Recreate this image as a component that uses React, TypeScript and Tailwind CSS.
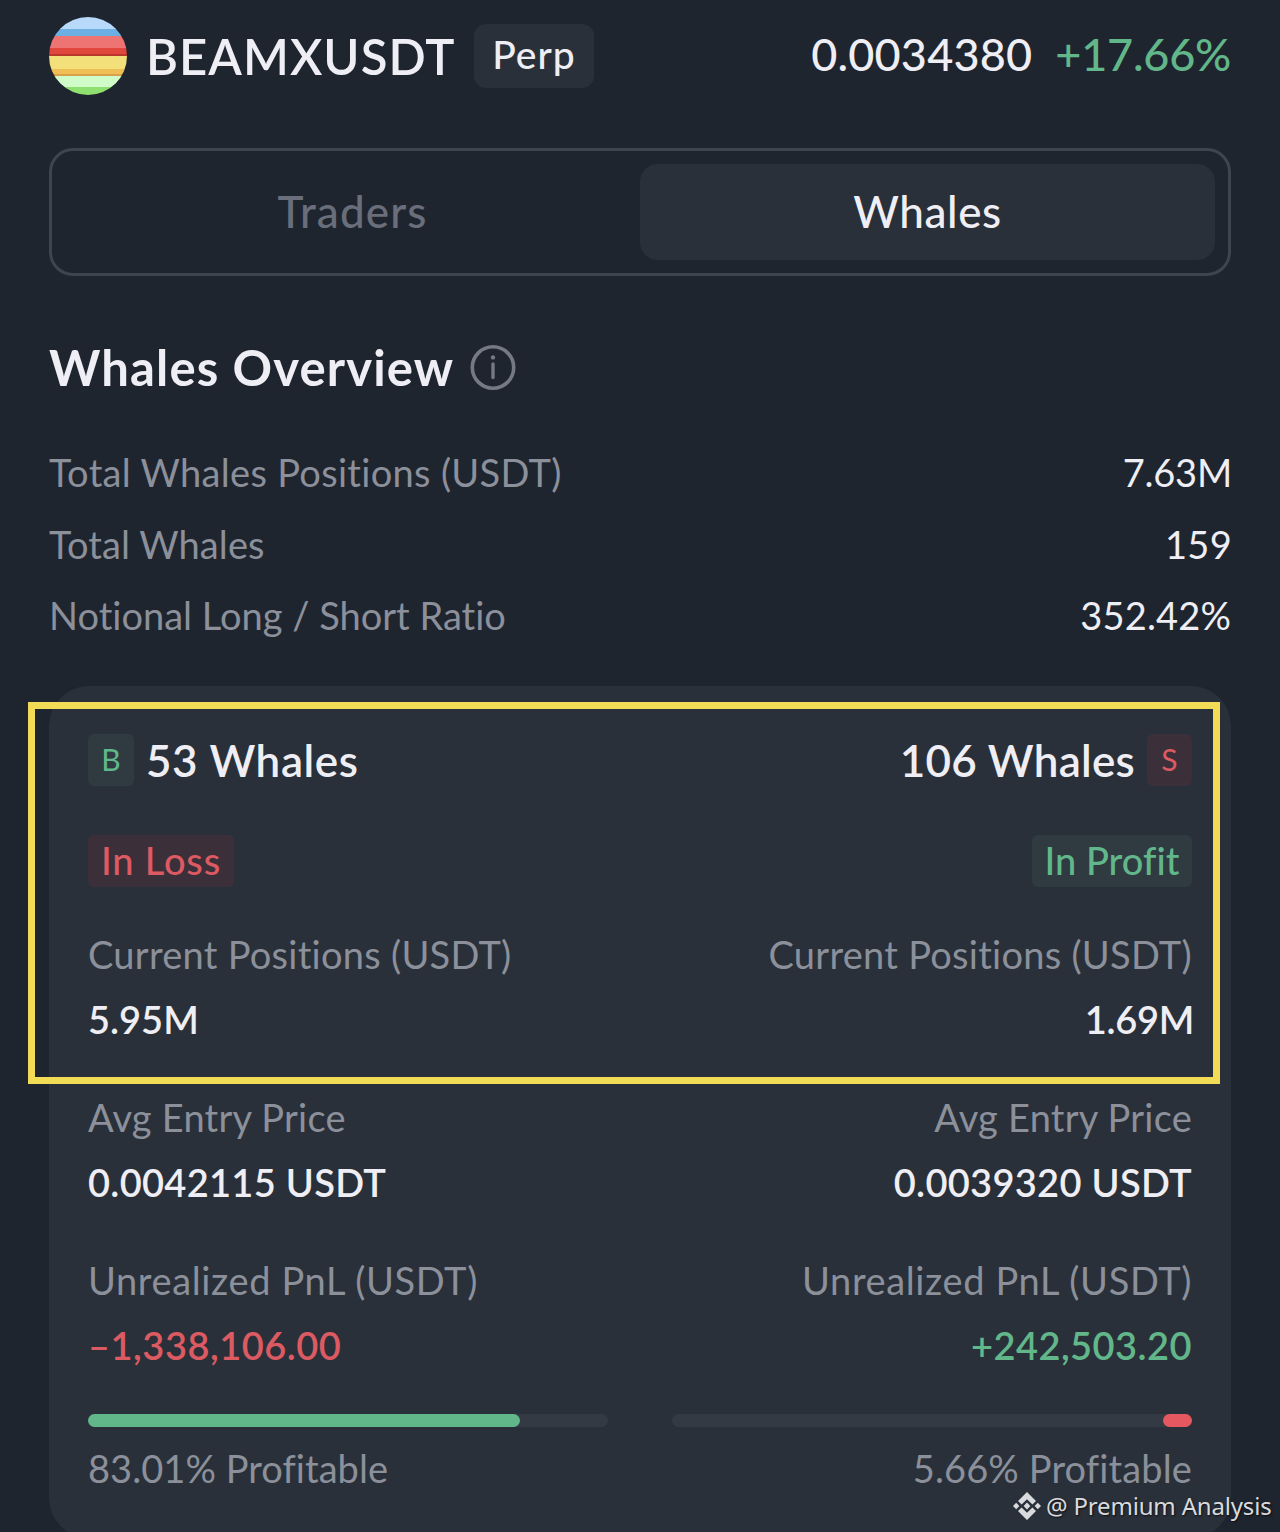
import { clsx } from 'clsx';

const overview = [
  { label: 'Total Whales Positions (USDT)', value: '7.63M', spacing: 'tracking-[0.31px]', valueSpacing: 'tracking-[-0.2px] -mr-px' },
  { label: 'Total Whales', value: '159', spacing: 'tracking-[0.1px]', valueSpacing: 'tracking-[0.3px] -mr-px' },
  { label: 'Notional Long / Short Ratio', value: '352.42%', spacing: 'tracking-[0.01px]', valueSpacing: 'tracking-[0.15px]' },
];

const bands = [
  { y: 0, h: 12, fill: '#b9d9fb' },
  { y: 12, h: 7, fill: '#6cafe2' },
  { y: 19, h: 12, fill: '#ee7373' },
  { y: 31, h: 6, fill: '#e2473d' },
  { y: 37, h: 2, fill: '#b9382c' },
  { y: 39, h: 13, fill: '#f3e07b' },
  { y: 52, h: 5, fill: '#efbf55' },
  { y: 57, h: 2, fill: '#d9a14b' },
  { y: 59, h: 11, fill: '#cffcc9' },
  { y: 70, h: 8, fill: '#8fe070' },
];

function CoinLogo() {
  return (
    <svg viewBox="0 0 78 78" className="size-[78px] shrink-0">
      <clipPath id="coin"><circle cx="39" cy="39" r="39" /></clipPath>
      <g clipPath="url(#coin)">
        {bands.map((b) => <rect key={b.y} x="0" y={b.y} width="78" height={b.h} fill={b.fill} />)}
      </g>
    </svg>
  );
}

function InfoIcon() {
  return (
    <svg viewBox="0 0 46 46" className="size-[46px]" fill="none" stroke="#747985" strokeLinecap="round">
      <circle cx="23" cy="23.5" r="20.7" strokeWidth="3.6" />
      <path d="M23 20V33.5" strokeWidth="3.4" />
      <circle cx="23" cy="13.4" r="2.2" fill="#747985" stroke="none" />
    </svg>
  );
}

function Watermark() {
  return (
    <div className="absolute top-[1488px] left-[1012px] flex h-9 items-center gap-1 whitespace-nowrap font-['Noto_Sans',sans-serif] text-[24px] tracking-[-0.18px] text-[#d9dadd] [text-shadow:1px_1px_2px_#000a]">
      <svg viewBox="0 0 30 30" className="size-[30px]" fill="#d9dadd">
        <path d="M15 1l9 9-3.6 3.6L15 8.2l-5.4 5.4L6 10z" />
        <path d="M15 29l9-9-3.6-3.6L15 21.8l-5.4-5.4L6 20z" />
        <path d="M4.2 11.8L7.4 15l-3.2 3.2L1 15z" />
        <path d="M25.8 11.8L29 15l-3.2 3.2-3.2-3.2z" />
        <path d="M15 11.6l3.4 3.4-3.4 3.4-3.4-3.4z" />
      </svg>
      <span>@ Premium Analysis</span>
    </div>
  );
}

type Stat = { label: string; labelSpacing: string; value: string; valueClass: string };

type SideProps = {
  side: 'B' | 'S';
  count: string;
  countSpacing: string;
  status: string;
  statusClass: string;
  stats: Stat[];
  percent: number;
  percentSpacing: string;
};

function WhaleSide({ side, count, countSpacing, status, statusClass, stats, percent, percentSpacing }: SideProps) {
  const short = side === 'S';
  const align = short ? 'items-end' : 'items-start';

  return (
    <div className={clsx('flex flex-1 flex-col', align)}>
      <div className={clsx('flex h-[52px] items-center gap-3', short && 'flex-row-reverse')}>
        <span
          className={clsx(
            'flex h-[52px] items-center justify-center rounded-md pb-0.5 text-[30px] leading-none',
            short ? 'w-[45px] bg-[#3b303a] text-[#dc5a62]' : 'w-[46px] bg-[#2f3b40] text-[#62b78a]',
          )}
        >
          {side}
        </span>
        <span className={clsx('text-[44px] leading-[52px] font-semibold', countSpacing)}>{count}</span>
      </div>

      <div className={clsx('mt-[49px] flex h-[52px] items-center justify-center rounded-md pb-0.5 font-medium', statusClass)}>
        {status}
      </div>

      <div className={clsx('mt-[43px] flex flex-col gap-[50px]', align)}>
        {stats.map((s) => (
          <div key={s.label} className={clsx('flex flex-col gap-[17px] leading-[48px]', align)}>
            <div className={clsx('text-[#8b909b]', s.labelSpacing)}>{s.label}</div>
            <div className={clsx('font-semibold', s.valueClass)}>{s.value}</div>
          </div>
        ))}
      </div>

      <div className={clsx('mt-[45px] flex h-[13px] w-full rounded-full bg-[#343a44]', short && 'justify-end')}>
        <div
          className={clsx('h-full rounded-full', short ? 'bg-[#e5585f]' : 'bg-[#62b78a]')}
          style={{ width: `${percent}%` }}
        />
      </div>
      <div className={clsx('mt-[17px] leading-[48px] text-[#8b909b]', percentSpacing)}>{percent}% Profitable</div>
    </div>
  );
}

export default function App() {
  return (
    <main className="relative h-[1532px] w-[1280px] overflow-hidden bg-[#1f252f] px-[49px] pt-[17px] font-['Lato',sans-serif] text-[38px] whitespace-nowrap text-[#eeeef4]">
      {/* Symbol and price */}
      <header className="flex h-[78px] items-center">
        <CoinLogo />
        <h1 className="ml-[19px] w-[310px] text-[49px] leading-[60px] font-semibold tracking-[1.05px]">BEAMXUSDT</h1>
        <span className="ml-[18px] flex h-16 w-[120px] items-center justify-center rounded-xl bg-[#2a3039] pb-1 text-[39px] font-medium tracking-[1px]">
          Perp
        </span>
        <div className="ml-auto flex gap-[23px] pb-0.5 text-[45px] font-medium">
          <span className="tracking-[0.2px]">0.0034380</span>
          <span className="tracking-[-0.25px] text-[#62b78a]">+17.66%</span>
        </div>
      </header>

      {/* Tabs */}
      <div className="mt-[53px] flex h-32 rounded-[24px] border-[3px] border-[#3f4550] p-[13px] text-[44px] font-medium">
        <div className="flex flex-1 items-center justify-center pb-0.5 tracking-[1.1px] text-[#696e7a]">Traders</div>
        <div className="flex flex-1 items-center justify-center rounded-[18px] bg-[#2a3039] pb-0.5 tracking-[0.55px]">Whales</div>
      </div>

      <div className="mt-[68px] flex h-[46px] items-center gap-[15px]">
        <h2 className="w-[406px] text-[49px] leading-[46px] font-bold tracking-[1.15px]">Whales Overview</h2>
        <InfoIcon />
      </div>

      <div className="mt-[47px]">
        {overview.map((row) => (
          <div key={row.label} className="flex h-[71.5px] items-center justify-between">
            <span className={clsx('text-[#8b909b]', row.spacing)}>{row.label}</span>
            <span className={row.valueSpacing}>{row.value}</span>
          </div>
        ))}
      </div>

      {/* Longs against shorts */}
      <section className="mt-[34.5px] flex h-[852px] gap-16 rounded-[40px] bg-[#2a3039] px-[39px] pt-12">
        <WhaleSide
          side="B"
          count="53 Whales"
          countSpacing="tracking-[0.6px]"
          status="In Loss"
          statusClass="w-[146px] bg-[#3b303a] text-[#dc5a62] tracking-[0.8px]"
          stats={[
            { label: 'Current Positions (USDT)', labelSpacing: 'tracking-[0.27px]', value: '5.95M', valueClass: 'tracking-[0.01px]' },
            { label: 'Avg Entry Price', labelSpacing: 'tracking-[0.23px]', value: '0.0042115 USDT', valueClass: 'tracking-[0.3px]' },
            { label: 'Unrealized PnL (USDT)', labelSpacing: 'tracking-[0.62px]', value: '–1,338,106.00', valueClass: 'text-[#dc5a62] tracking-[0.5px]' },
          ]}
          percent={83.01}
          percentSpacing="tracking-[0.05px]"
        />
        <WhaleSide
          side="S"
          count="106 Whales"
          countSpacing="tracking-[0.25px]"
          status="In Profit"
          statusClass="w-40 bg-[#2f3b40] text-[#62b78a] tracking-[0.01px]"
          stats={[
            { label: 'Current Positions (USDT)', labelSpacing: 'tracking-[0.27px]', value: '1.69M', valueClass: '-mr-0.5 tracking-[-0.3px]' },
            { label: 'Avg Entry Price', labelSpacing: 'tracking-[0.23px]', value: '0.0039320 USDT', valueClass: 'tracking-[0.3px]' },
            { label: 'Unrealized PnL (USDT)', labelSpacing: 'tracking-[0.62px]', value: '+242,503.20', valueClass: 'text-[#62b78a] tracking-[0.45px]' },
          ]}
          percent={5.66}
          percentSpacing="tracking-[0.13px]"
        />
      </section>

      {/* Highlight frame over the top of the card */}
      <div className="absolute top-[702px] left-7 h-[382px] w-[1192px] border-[7px] border-[#f3dc55]" />

      <Watermark />
    </main>
  );
}
